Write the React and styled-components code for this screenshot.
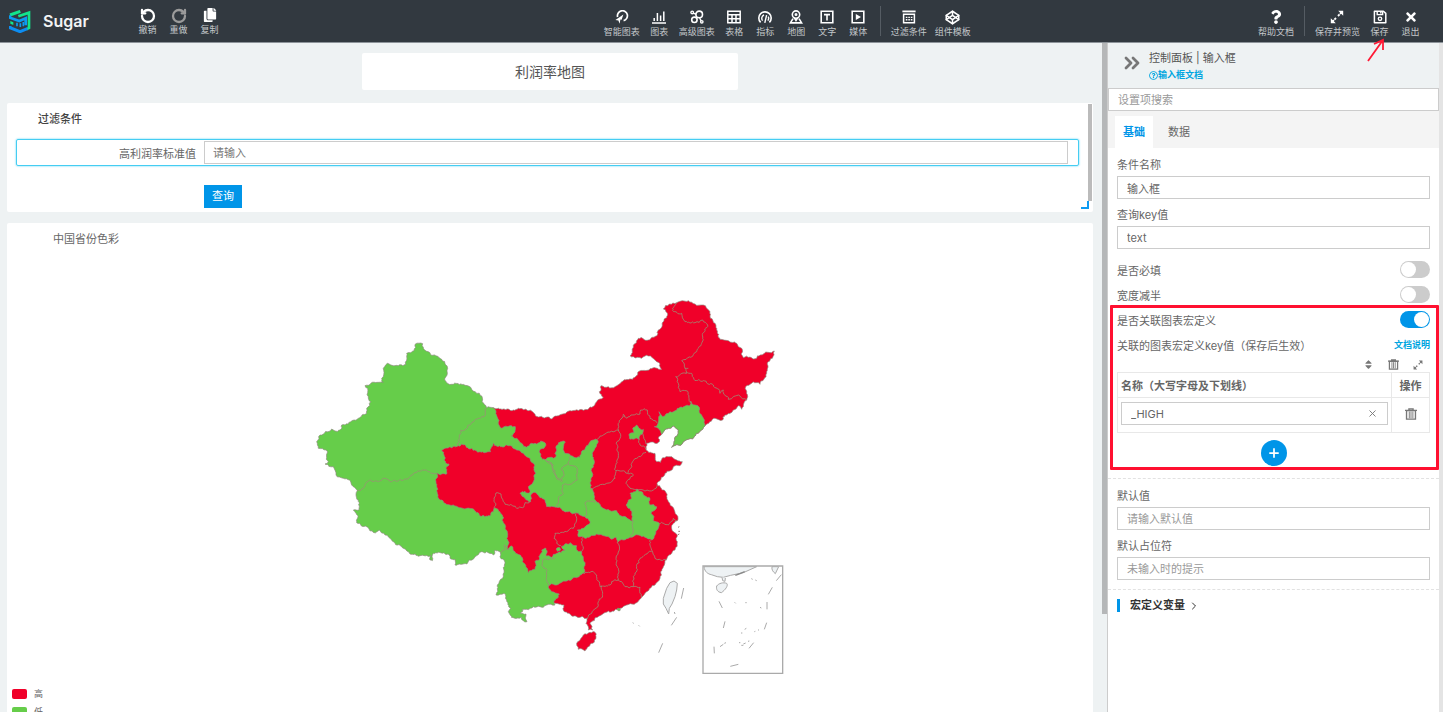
import React from "react";
import styled, { createGlobalStyle, css } from "styled-components";
import { RotateCcw, RotateCw, Codepen, ChevronsRight, ChevronRight, Plus, X } from "lucide-react";
import { FaCopy, FaQuestion, FaTimes, FaSort, FaRegQuestionCircle } from "react-icons/fa";

const RED = "#f00029";
const GREEN = "#66cd4a";

/* ---------- toolbar icons ---------- */

const Icon = ({ children, size = 14 }) => (
  <svg width={size} height={size} viewBox="0 0 14 14" fill="none" stroke="currentColor" strokeWidth="1.4">
    {children}
  </svg>
);

const SmartIcon = () => (
  <Icon>
    <path d="M2.6 7A5 5 0 1 1 8.6 10.6" strokeWidth="1.7" />
    <path d="M.4 10 8.4 4.4 6.6 9.8 5.4 9.4 4.6 13.8 3.4 10.6Z" fill="currentColor" stroke="none" />
  </Icon>
);

const ChartIcon = () => (
  <Icon>
    <path d="M0 13H14M2.2 11V8M5.4 11V3M8.6 11V5.4M11.8 11V1.4" strokeWidth="1.5" />
  </Icon>
);

const AdvancedIcon = () => (
  <Icon>
    <circle cx="9.2" cy="4.4" r="3.3" strokeWidth="1.6" />
    <circle cx="4.4" cy="9.8" r="2.7" strokeWidth="1.6" />
    <circle cx="2.2" cy="2.4" r="1.3" />
    <circle cx="11.8" cy="11.8" r="1.2" />
    <path d="M3.2 3.4 6.2 4M9.6 8 11.2 10.8" />
  </Icon>
);

const TableIcon = () => (
  <Icon>
    <path d="M.8 1.3H13.2V12.7H.8ZM.8 4.8H13.2M.8 8.8H13.2M5 4.8V12.7M9 4.8V12.7" strokeWidth="1.5" />
  </Icon>
);

const GaugeIcon = () => (
  <Icon>
    <path d="M2.6 12.4A6.2 6.2 0 1 1 11.4 12.4" strokeWidth="1.6" />
    <path d="M4.6 10.6A3.6 3.6 0 0 1 6 5M9.8 10.6A3.6 3.6 0 0 0 10.2 6.6M6.8 12.8 8.6 5.2" />
  </Icon>
);

const MapIcon = () => (
  <Icon>
    <circle cx="7" cy="4.6" r="3.7" strokeWidth="1.6" />
    <circle cx="7" cy="4.6" r=".8" />
    <path d="M5.2 7.6 7 10.4 8.8 7.6M4 8.6 1.4 12.9H12.6L10 8.6" strokeWidth="1.6" />
  </Icon>
);

const TextIcon = () => (
  <Icon>
    <path d="M1.2 1.2H12.8V12.8H1.2ZM4 4.6H10M7 4.6V10.6" strokeWidth="1.6" />
  </Icon>
);

const MediaIcon = () => (
  <Icon>
    <path d="M1.2 1.2H12.8V12.8H1.2Z" strokeWidth="1.6" />
    <path d="M4.8 4 10 7 4.8 10Z" fill="currentColor" stroke="none" />
  </Icon>
);

const FilterIcon = () => (
  <Icon>
    <path d="M.4 1.4H13.6" strokeWidth="1.8" />
    <path d="M1.6 4.2H12.4V12.8H1.6Z" strokeWidth="1.5" />
    <path d="M3.8 7.4H10.4M3.8 9.8H10.4" strokeDasharray="1.6 .9" />
  </Icon>
);

const ExpandIcon = ({ size }) => (
  <Icon size={size}>
    <path d="M8 6 12 2M6 8 2 12" strokeWidth="1.9" strokeDasharray="2.2 .7" />
    <path d="M8.2 .8H13.2V5.8ZM.8 8.2V13.2H5.8Z" fill="currentColor" stroke="none" />
  </Icon>
);

const SaveIcon = () => (
  <Icon>
    <path d="M1.4 1.2H10.4L12.8 3.4V12.8H1.4Z" strokeWidth="1.5" strokeLinejoin="round" />
    <path d="M4.2 1.2V4.6H9.6V1.2M7.8 1.6V3.6" />
    <circle cx="7" cy="8.8" r="1.7" />
  </Icon>
);

const TrashIcon = ({ size = 12 }) => (
  <Icon size={size}>
    <path d="M0 2.8H14M4.6 2.4V1H9.4V2.4" strokeWidth="1.6" />
    <path d="M1.8 3H12.2V13H1.8Z" strokeWidth="1.6" />
    <path d="M5 4V12M7 4V12M9.2 4V12" strokeWidth="1.1" />
  </Icon>
);

const Logo = () => (
  <svg width="22" height="23" viewBox="0 0 66 69" fill="none" strokeWidth="8">
    <path d="M3 15 34 4" stroke="#12e58c" strokeWidth="9" />
    <path d="M28 19 60 8V54L52 58" stroke="#12e58c" />
    <path d="M3 16V23L31 33 50 25V46" stroke="#0d9bf2" />
    <path d="M3 48V53L33 65 55 56" stroke="#0d8df2" strokeWidth="9" />
    <path d="M24 38V49M34 40V51M43 36V49" stroke="#0d9bf2" strokeWidth="5" />
    <path d="M4 33 13 37V45L4 41Z" fill="#12e58c" />
  </svg>
);

/* ---------- map ---------- */

const parse = (text, dx = 0, dy = 0) => {
  const n = text.trim().split(/\s+/).map(Number);
  const points = [];
  for (let i = 0; i < n.length; i += 2) points.push([n[i] + dx, n[i + 1] + dy]);
  return points;
};

// survey sheets: west, north-east, south-east
const west = text => parse(text, 0, 120);
const north = text => parse(text, 720, 0);
const south = text => parse(text, 720, 480);

const noise = (x, y) => {
  const v = Math.sin(x * 12.9898 + y * 78.233) * 43758.5453;
  return v - Math.floor(v) - 0.5;
};

// breaks long edges so that borders look natural; shared edges stay shared
const roughen = ([a, b]) => {
  const length = Math.hypot(b[0] - a[0], b[1] - a[1]);
  if (length < 7) return [a];
  const swap = a[0] > b[0] || (a[0] === b[0] && a[1] > b[1]);
  const k = noise(a[0] + b[0], a[1] + b[1]) * Math.min(length * 0.5, 8) * (swap ? -1 : 1);
  const mid = [
    (a[0] + b[0]) / 2 - ((b[1] - a[1]) / length) * k,
    (a[1] + b[1]) / 2 + ((b[0] - a[0]) / length) * k,
  ];
  return [...roughen([a, mid]), ...roughen([mid, b])];
};

const toPath = (points, closed) => {
  const ring = closed ? [...points, points[0]] : points;
  const out = [];
  for (let i = 0; i < ring.length - 1; i += 1) out.push(...roughen([ring[i], ring[i + 1]]));
  out.push(ring[ring.length - 1]);
  return `M${out.map(p => `${p[0].toFixed(1)} ${p[1].toFixed(1)}`).join("L")}${closed ? "Z" : ""}`;
};

const HIGH_AREAS = [
  [
    ...west("580 233 610 237 640 240 655 235 685 242 705 253"),
    ...north(`0 380 18 382 35 387 50 378 90 362 130 361 155 352 170 335 190 322 178 305 183 287 205 290 225 290
      245 275 278 268 295 245 330 236 365 238 360 222 345 210 325 198 305 205 280 200 270 197 280 170 295 145
      325 150 352 135 355 120 372 88 383 75 370 57 388 42 410 38 445 32 465 42 490 45 508 62 518 90 530 120
      540 148 565 152 590 160 605 175 610 203 650 205 660 195 685 187 703 183 697 205 685 215 680 250 660 283
      635 280 617 290 620 330 610 350 605 358 595 347 580 360 555 375 548 390 525 385 495 408 462 440 435 452
      395 472 402 455 415 420 400 408 385 415 365 433 355 445 358 455 345 460 320 460 318 480 345 490 350 515
      362 517 368 503 390 500 410 510 427 515 420 527 400 530 375 550 355 575`),
    ...south(`352 105 375 122 385 155 410 195 412 212 400 220 395 235 403 247 412 255 412 275 405 300 380 328
      370 350 362 365 360 385 345 405 320 425 305 442 290 458 260 465 240 475 215 485 180 497 155 515 150 520
      158 540 145 540 138 520 142 505 110 500 95 498 70 480 72 465 45 460 0 400`),
    ...west("640 700 600 640 390 560 390 340 560 300"),
  ],
  south("165 547 168 560 158 580 135 603 115 598 113 575 130 555 150 547"),
];

const LOW_AREAS = [
  [
    ...west(`346 42 368 41 370 52 380 64 395 76 410 78 425 88 437 105 441 120 438 140 434 150 440 158 460 163
      495 166 515 178 538 190 548 210 560 233 580 233 592 262 595 282 606 295 630 287 646 290 645 305 634 318
      650 325 665 340 680 352 690 342 710 342 722 333 735 338 732 355 718 365 722 380 736 390`),
    ...north(`48 500 52 465 62 455 76 457 70 475 75 490 100 500 120 502 124 485 138 470 148 458 172 450 165 475
      158 495 162 510 155 535 157 560`),
    ...south(`152 115 170 155 190 175 230 182 235 190 262 205 278 212 275 195 270 175 258 165 265 150 275 145
      270 130 285 125 290 117 305 125 315 138 330 145 330 165 350 170 345 180 335 185 342 200 340 212 358 220
      355 235 345 255 335 270 315 262 295 255 270 262 250 270 232 278 228 262 210 265 195 258 170 252 150 260
      135 265 115 260 112 240 130 235 148 222 145 208 120 195 108 188 80 185 65 178 50 172 20 170 15 150 0 143`),
    ...west(`705 487 692 497 692 515 675 505 660 490 675 484 690 487 685 470 700 455 707 430 700 400 690 385
      670 370 650 360 620 345 605 350 580 340 572 365 540 365 515 355 485 342 425 360 432 375 432 390 447 402
      438 415 440 432 410 430 408 460 412 490 420 510 435 520 460 525 500 535 520 537 540 558 570 558 580 545
      582 535 595 540 610 565 617 590 620 625 624 660 635 648 645 665 660 675 672 700 685 728 705 718 705 695
      718 688 725 660 738 655 740 670`),
    ...south(`18 318 35 322 50 310 75 300 65 290 90 278 110 287 110 300 125 305 130 320 132 350 130 370 105 382
      85 390 50 405 30 405 25 412 35 425 58 432 55 442 42 452 45 465 20 465 10 472`),
    ...west(`720 830 700 830 680 838 668 838 662 850 678 852 681 875 670 872 664 862 642 864 625 845 632 835
      620 810 612 790 588 795 592 765 608 745 612 720 612 690 600 680 600 665 585 660 580 675 560 665 545 665
      525 680 508 690 500 702 465 705 465 688 450 685 448 675 415 667 400 670 397 692 390 690 392 675 360 677
      330 672 310 655 300 645 285 640 275 630 255 615 238 600 222 608 200 590 170 578 168 550 160 540 178 538
      175 510 168 495 172 482 155 465 148 450 130 445 108 435 100 410 75 402 85 395 78 360 55 355 50 335 60 315
      95 297 105 303 120 300 125 285 145 282 175 265 200 250 200 235 212 215 205 200 203 175 195 167 232 157
      250 157 245 145 262 100 280 107 318 103 320 70 342 62`),
  ],
  north("290 405 297 415 310 418 308 430 298 440 298 448 268 445 270 430 282 428 278 415"),
  north(`357 365 368 380 390 365 420 352 448 348 452 333 465 345 478 352 482 372 490 385 495 408 462 440 435 452
    395 472 402 455 415 420 400 408 385 415 365 433 355 415 343 410 355 395`),
  south("232 475 241 476 240 482 234 482"),
  south("48 297 58 292 62 300 52 304"),
];

const BORDERS = [
  west("172 482 190 475 205 453 235 455 250 445 270 455 300 448 330 440 345 428 375 420 410 430"),
  west("560 233 556 255 535 265 505 285 498 297 482 300 478 325 472 345"),
  west("582 535 585 500 592 488 603 492 610 515 625 525 650 535 668 533 675 518 690 515"),
  west("624 660 612 645 614 660 602 668"),
  west("765 685 750 688 728 690 725 705 742 720 740 740 745 768"),
  west("736 390 755 405 765 430 778 450"),
  north("15 508 40 525 45 555 65 575 70 560 65 540 80 525 85 520 88 500"),
  north("85 520 112 540 112 570 95 582 68 585 65 600 70 610 55 630 50 650"),
  south("168 157 135 158 140 175 133 200"),
  south("108 190 110 210 100 235 80 245 45 250 42 265 50 280 65 290"),
  south("128 262 128 300 124 305"),
  south("278 212 280 240 270 262"),
  north("170 450 195 432 235 420 235 400 250 373 260 385 300 372 302 360 322 360 330 385 350 398"),
  north("235 420 242 440 228 460 235 490 228 545 225 565 200 580 152 597"),
  north("318 487 290 505 275 520 262 550 228 542"),
  north("262 550 280 555 258 580 265 590 290 600 340 600 352 585"),
  north("298 448 300 465 318 478"),
  north("308 430 315 450 318 462"),
  south("358 220 385 225 400 205 410 212"),
  south("330 270 335 300 345 325 380 330"),
  south("335 305 300 325 290 350 280 380 280 410"),
  south("232 278 238 300 228 325 235 355 235 390 215 395 210 405 180 410 170 375 160 365 132 372"),
  south("235 390 245 395 255 410 280 410 300 412 305 442"),
  south("185 408 188 430 175 455 155 490 142 505"),
  north("410 38 398 62 425 70 435 95 465 98 488 90 503 105 488 130 485 160 470 185 425 212 435 235 445 235"),
  north("435 235 438 250 455 250 462 268 490 272 520 285 540 310 550 300 565 328 600 318 620 330"),
  north("438 250 407 260 415 280 420 305 438 302 448 335"),
];

const ProvinceMap = () => (
  <MapSvg viewBox="30 0 1440 1170" role="img" aria-label="中国省份色彩">
    <g stroke="#8f8a80" strokeWidth="2" strokeLinejoin="round">
      {HIGH_AREAS.map((area, i) => (
        <path key={i} d={toPath(area, true)} fill={RED} />
      ))}
      {LOW_AREAS.map((area, i) => (
        <path key={i} d={toPath(area, true)} fill={GREEN} />
      ))}
      {BORDERS.map((line, i) => (
        <path key={i} d={toPath(line)} fill="none" strokeWidth="2.4" stroke="#9a8f75" />
      ))}
    </g>
    <g transform="translate(720 480)" fill="none" stroke="#aaa" strokeWidth="3">
      <path d="M402 393 412 400 410 420 405 440 396 462 388 475 386 492 378 475 370 462 370 445 380 415 390 398Z" fill="#eef2f4" />
      <path d="M431 414 424 446M410 502 394 526M368 580 356 608M403 486 405 492M278 518 281 520M296 526 299 529" />
      <path d="M414 232 418 230M415 244 420 244M414 254 418 252" stroke="#9a7a78" />
      <path d="M489 348H728V670H489Z" strokeWidth="4" />
      <path d="M492 350C494 366 504 372 514 374L532 380 550 382 572 376 610 368 650 350Z" fill="#eef2f4" />
      <path d="M546 382 548 392 555 394 556 384M530 408C536 400 550 396 560 400 566 406 556 420 544 428 532 426 528 418 530 408Z" fill="#eef2f4" />
      <path d="M696 350C694 360 700 366 706 371L716 350Z" fill="#eef2f4" />
      <path d="M586 376 600 371 614 365" stroke="#888" strokeWidth="4" />
      <path d="M724 374 709 392M697 412 685 433M681 456V478M680 518 673 538M537 454 547 474M555 514 550 534M522 590 523 610M540 590 550 583M553 580 558 578M641 578 627 595M571 649 595 643" />
      <path d="M634 386 638 388M646 390 650 392M584 457 587 460M616 458 620 458M660 472 664 474M614 538 619 535M603 549 607 549M643 545 646 544M654 541 657 539M597 578 601 578M604 586 610 586M610 582 617 579M624 574 628 573" />
    </g>
  </MapSvg>
);

/* ---------- page ---------- */

const LEFT_TOOLS = [
  { label: "撤销", icon: <RotateCcw size={16} strokeWidth={3.4} /> },
  { label: "重做", icon: <RotateCw size={16} strokeWidth={3.4} />, muted: true },
  { label: "复制", icon: <FaCopy size={14} /> },
];

const CHART_TOOLS = [
  { label: "智能图表", icon: <SmartIcon /> },
  { label: "图表", icon: <ChartIcon /> },
  { label: "高级图表", icon: <AdvancedIcon /> },
  { label: "表格", icon: <TableIcon /> },
  { label: "指标", icon: <GaugeIcon /> },
  { label: "地图", icon: <MapIcon /> },
  { label: "文字", icon: <TextIcon /> },
  { label: "媒体", icon: <MediaIcon /> },
];

const Tools = ({ items }) =>
  items.map(({ label, icon, muted }) => (
    <ToolButton key={label} type="button" $muted={muted}>
      {icon}
      <span>{label}</span>
    </ToolButton>
  ));

function Toolbar() {
  return (
    <Header>
      <Brand>
        <Logo />
        Sugar
      </Brand>
      <ToolGroup $high>
        <Tools items={LEFT_TOOLS} />
      </ToolGroup>
      <Spacer $grow={4} />
      <ToolGroup>
        <Tools items={CHART_TOOLS} />
        <Divider />
        <Tools
          items={[
            { label: "过滤条件", icon: <FilterIcon /> },
            { label: "组件模板", icon: <Codepen size={15} strokeWidth={2.4} /> },
          ]}
        />
      </ToolGroup>
      <Spacer $grow={3} />
      <ToolGroup>
        <Tools items={[{ label: "帮助文档", icon: <FaQuestion size={14} /> }]} />
        <Divider />
        <Tools items={[{ label: "保存并预览", icon: <ExpandIcon size={14} /> }]} />
        <SaveSlot>
          <Tools items={[{ label: "保存", icon: <SaveIcon /> }]} />
          <Arrow width="20" height="26" viewBox="0 0 20 26">
            <path d="M2 24 17 3M8 7 17 3 17 13" fill="none" stroke="#ff1a35" strokeWidth="1.8" />
          </Arrow>
        </SaveSlot>
        <Tools items={[{ label: "退出", icon: <FaTimes size={14} /> }]} />
      </ToolGroup>
    </Header>
  );
}

function Field({ id, label, ...rest }) {
  return (
    <FieldWrapper>
      <label htmlFor={id}>{label}</label>
      <TextInput id={id} type="text" {...rest} />
    </FieldWrapper>
  );
}

function ToggleRow({ id, label, checked }) {
  return (
    <Row>
      <label htmlFor={id}>{label}</label>
      <Toggle id={id} type="checkbox" defaultChecked={checked} />
    </Row>
  );
}

function MacroTable() {
  return (
    <Table>
      <thead>
        <tr>
          <th>名称（大写字母及下划线）</th>
          <th>操作</th>
        </tr>
      </thead>
      <tbody>
        <tr>
          <td>
            <ClearableInput>
              <input type="text" defaultValue="_HIGH" aria-label="名称" />
              <IconButton type="button" aria-label="清空">
                <X size={11} strokeWidth={2} />
              </IconButton>
            </ClearableInput>
          </td>
          <td>
            <IconButton type="button" aria-label="删除">
              <TrashIcon />
            </IconButton>
          </td>
        </tr>
      </tbody>
    </Table>
  );
}

function ControlPanel() {
  return (
    <Panel>
      <PanelHeader>
        <IconButton type="button" aria-label="收起">
          <ChevronsRight size={24} strokeWidth={2.8} />
        </IconButton>
        <div>
          <PanelTitle>控制面板 | 输入框</PanelTitle>
          <DocLink href="#doc">
            <FaRegQuestionCircle size={9} />
            输入框文档
          </DocLink>
        </div>
      </PanelHeader>
      <SearchInput type="text" placeholder="设置项搜索" aria-label="设置项搜索" />
      <TabList>
        <Tab type="button" $active>基础</Tab>
        <Tab type="button">数据</Tab>
      </TabList>
      <Section $bottom={12}>
        <Field id="name" label="条件名称" defaultValue="输入框" />
        <Field id="key" label="查询key值" defaultValue="text" />
        <Toggles>
          <ToggleRow id="required" label="是否必填" />
          <ToggleRow id="half" label="宽度减半" />
          <Highlight>
            <ToggleRow id="macro" label="是否关联图表宏定义" checked />
            <Row>
              <span>关联的图表宏定义key值（保存后生效）</span>
              <DocLink href="#macro-doc">文档说明</DocLink>
            </Row>
            <TableActions>
              <IconButton type="button" aria-label="排序"><FaSort size={11} /></IconButton>
              <IconButton type="button" aria-label="清除"><TrashIcon size={11} /></IconButton>
              <IconButton type="button" aria-label="展开"><ExpandIcon size={10} /></IconButton>
            </TableActions>
            <MacroTable />
            <AddButton type="button" aria-label="添加"><Plus size={14} strokeWidth={3} /></AddButton>
          </Highlight>
        </Toggles>
      </Section>
      <Section $bottom={4}>
        <Field id="default" label="默认值" placeholder="请输入默认值" />
        <Field id="placeholder" label="默认占位符" placeholder="未输入时的提示" />
      </Section>
      <MacroHeading type="button">
        宏定义变量
        <ChevronRight size={12} strokeWidth={2} />
      </MacroHeading>
    </Panel>
  );
}

function App() {
  return (
    <Page>
      <GlobalStyle />
      <Toolbar />
      <Body>
        <Workspace>
          <TitleCard>利润率地图</TitleCard>
          <FilterCard>
            <FilterTitle>过滤条件</FilterTitle>
            <FilterRow>
              <label htmlFor="threshold">高利润率标准值</label>
              <FilterInput id="threshold" type="text" placeholder="请输入" />
            </FilterRow>
            <QueryButton type="button">查询</QueryButton>
            <CardScroll />
            <ResizeCorner />
          </FilterCard>
          <MapCard>
            <MapTitle>中国省份色彩</MapTitle>
            <ProvinceMap />
            <Legend>
              <LegendItem $color={RED}>高</LegendItem>
              <LegendItem $color={GREEN}>低</LegendItem>
            </Legend>
          </MapCard>
        </Workspace>
        <ScrollTrack />
        <ControlPanel />
      </Body>
    </Page>
  );
}

export default App;

const GlobalStyle = createGlobalStyle`
  * {
    box-sizing: border-box;
  }
  body {
    margin: 0;
    background: #fff;
  }
  body, button, input {
    font-family: Inter, "Noto Sans CJK SC", sans-serif;
    font-size: 11px;
    color: #666;
  }
  button {
    padding: 0;
    border: 0;
    background: none;
  }
  a {
    text-decoration: none;
  }
  input::placeholder {
    color: #999;
    opacity: 1;
  }
`;

const Page = styled.div`
  display: flex;
  flex-direction: column;
  height: 100vh;
  padding-bottom: 2px;
  overflow: hidden;
`;

const Header = styled.header`
  display: flex;
  flex: none;
  height: 43px;
  padding: 0 21px 0 9px;
  background: #323940;
  border-bottom: 1px solid #8d949a;
`;

const Brand = styled.div`
  display: flex;
  align-items: center;
  gap: 12px;
  width: 127px;
  color: #f2f4f5;
  font-size: 16px;
  font-weight: 600;
`;

const ToolGroup = styled.div`
  display: flex;
  gap: 8px;
  padding-top: ${props => (props.$high ? "8px" : "10px")};
`;

const ToolButton = styled.button`
  display: flex;
  flex-direction: column;
  align-items: center;
  justify-content: space-between;
  min-width: 23px;
  height: 28px;
  color: ${props => (props.$muted ? "#9b9b9b" : "#fff")};
  span {
    color: #c3c7ca;
    font-size: 9px;
    line-height: 12px;
    white-space: nowrap;
  }
`;

const Divider = styled.div`
  width: 1px;
  height: 30px;
  margin: -4px 2px 0;
  background: #555c63;
`;

const Spacer = styled.div`
  flex: ${props => props.$grow};
`;

const SaveSlot = styled.div`
  position: relative;
`;

const Arrow = styled.svg`
  position: absolute;
  left: -2px;
  top: 27px;
  z-index: 2;
`;

const Body = styled.div`
  display: flex;
  flex: 1;
  min-height: 0;
  border-right: 4px solid #e4e4e4;
`;

const Workspace = styled.main`
  flex: 1;
  min-width: 0;
  padding: 10px 9px 0 7px;
  overflow: hidden;
  background: #eef2f3;
`;

const cardStyle = css`
  background: #fff;
  border-radius: 2px;
`;

const TitleCard = styled.h1`
  ${cardStyle}
  width: 34.6%;
  margin: 0 auto 13px;
  color: #555;
  font-size: 14px;
  font-weight: 400;
  line-height: 37px;
  text-align: center;
`;

const FilterCard = styled.section`
  ${cardStyle}
  position: relative;
  margin-bottom: 11px;
  padding: 6px 14px 4px 9px;
`;

const FilterTitle = styled.h2`
  margin: 0 0 10px;
  padding-left: 22px;
  font-size: 11px;
  font-weight: 500;
  line-height: 20px;
  color: #444;
`;

const FilterRow = styled.div`
  display: flex;
  align-items: center;
  margin-bottom: 19px;
  padding: 1px 10px 1px 0;
  border: 1px solid #45cdf2;
  border-radius: 2px;
  box-shadow: 0 0 2px #45cdf2;
  label {
    width: 187px;
    padding-right: 8px;
    text-align: right;
  }
`;

const inputStyle = css`
  width: 100%;
  height: 23px;
  padding: 0 9px;
  border: 1px solid #ccc;
  outline: 0;
  background: #fff;
`;

const FilterInput = styled.input`
  ${inputStyle}
  flex: 1;
  padding: 0 8px;
  &::placeholder {
    color: #777;
  }
`;

const QueryButton = styled.button`
  display: block;
  margin-left: 188px;
  padding: 0 8px;
  background: #0095e8;
  color: #fff;
  line-height: 23px;
`;

const CardScroll = styled.div`
  position: absolute;
  top: 1px;
  right: 1px;
  bottom: 11px;
  width: 4px;
  background: #bbb;
`;

const ResizeCorner = styled.div`
  position: absolute;
  right: 4px;
  bottom: 3px;
  width: 8px;
  height: 8px;
  border: solid #0d9bf2;
  border-width: 0 2px 2px 0;
`;

const MapCard = styled.section`
  ${cardStyle}
  padding: 6px 5px 10px;
`;

const MapTitle = styled.h2`
  margin: 0 0 41px 41px;
  font-size: 11px;
  font-weight: 400;
  line-height: 20px;
`;

const MapSvg = styled.svg`
  display: block;
  width: 480px;
  max-width: 100%;
  margin: 0 auto;
`;

const Legend = styled.ul`
  margin: 5px 0 0;
  padding: 0;
  list-style: none;
`;

const LegendItem = styled.li`
  display: flex;
  align-items: center;
  gap: 7px;
  font-size: 9px;
  line-height: 18px;
  &::before {
    width: 15px;
    height: 10px;
    border-radius: 2px;
    background: ${props => props.$color};
    content: "";
  }
`;

const ScrollTrack = styled.div`
  width: 6px;
  background: #eef2f3;
  border-right: 1px solid #ccc;
  &::before {
    display: block;
    height: 571px;
    background: #b5b7b8;
    content: "";
  }
`;

const Panel = styled.aside`
  width: 331px;
  overflow: hidden;
`;

const PanelHeader = styled.div`
  display: flex;
  align-items: flex-start;
  gap: 5px;
  height: 45px;
  padding: 6px 12px 0;
  background: #eef2f3;
  > button {
    height: 28px;
  }
`;

const PanelTitle = styled.div`
  line-height: 18px;
  color: #555;
`;

const DocLink = styled.a`
  display: inline-flex;
  align-items: center;
  color: #00a5e0;
  font-size: 9px;
  font-weight: 600;
  line-height: 16px;
`;

const SearchInput = styled.input`
  ${inputStyle}
  display: block;
`;

const TabList = styled.div`
  display: flex;
  padding: 5px 7px 0;
  background: #f4f4f4;
`;

const Tab = styled.button`
  width: 38px;
  margin-right: 7px;
  line-height: 32px;
  background: ${props => (props.$active ? "#fff" : "none")};
  color: ${props => (props.$active ? "#0095e8" : "#666")};
  font-weight: ${props => (props.$active ? 600 : 400)};
`;

const Section = styled.section`
  padding: 6px 9px ${props => props.$bottom}px;
  border-bottom: 1px dashed #e2e2e2;
`;

const FieldWrapper = styled.div`
  margin-bottom: 5px;
  label {
    display: block;
    line-height: 22px;
  }
`;

const TextInput = styled.input`
  ${inputStyle}
  display: block;
`;

const Toggles = styled.div`
  padding-top: 3px;
`;

const Row = styled.div`
  display: flex;
  align-items: center;
  justify-content: space-between;
  height: 25px;
`;

const Toggle = styled.input`
  width: 30px;
  height: 17px;
  margin: 0;
  padding: 1px;
  appearance: none;
  border-radius: 9px;
  background: #ccc;
  &::before {
    display: block;
    width: 15px;
    height: 15px;
    border-radius: 50%;
    background: #fff;
    content: "";
  }
  &:checked {
    background: #0095e8;
  }
  &:checked::before {
    margin-left: auto;
  }
`;

const Highlight = styled.div`
  position: relative;
  &::after {
    position: absolute;
    inset: -2px -9px -4px -7px;
    border: 3px solid #ff1030;
    border-radius: 1px;
    pointer-events: none;
    content: "";
  }
`;

const TableActions = styled.div`
  display: flex;
  justify-content: flex-end;
  gap: 14px;
  height: 15px;
  padding-right: 7px;
`;

const IconButton = styled.button`
  display: inline-flex;
  align-items: center;
  justify-content: center;
  color: #777;
`;

const Table = styled.table`
  width: 100%;
  border-collapse: collapse;
  th,
  td {
    height: 35px;
    padding: 0 3px;
    border: 1px solid #e8e8e8;
  }
  th {
    height: 25px;
    font-weight: 600;
    text-align: left;
  }
  th:last-child,
  td:last-child {
    width: 38px;
    text-align: center;
  }
`;

const ClearableInput = styled.div`
  ${inputStyle}
  display: flex;
  margin-bottom: 3px;
  input {
    flex: 1;
    min-width: 0;
    padding: 0;
    border: 0;
    outline: 0;
  }
`;

const AddButton = styled.button`
  display: flex;
  align-items: center;
  justify-content: center;
  width: 26px;
  height: 26px;
  margin: 7px auto 0;
  border-radius: 50%;
  background: #0095e8;
  color: #fff;
`;

const MacroHeading = styled.button`
  display: flex;
  align-items: center;
  gap: 3px;
  margin: 9px;
  padding-left: 10px;
  border-left: 3px solid #0095e8;
  color: #333;
  font-weight: 600;
  line-height: 13px;
`;
